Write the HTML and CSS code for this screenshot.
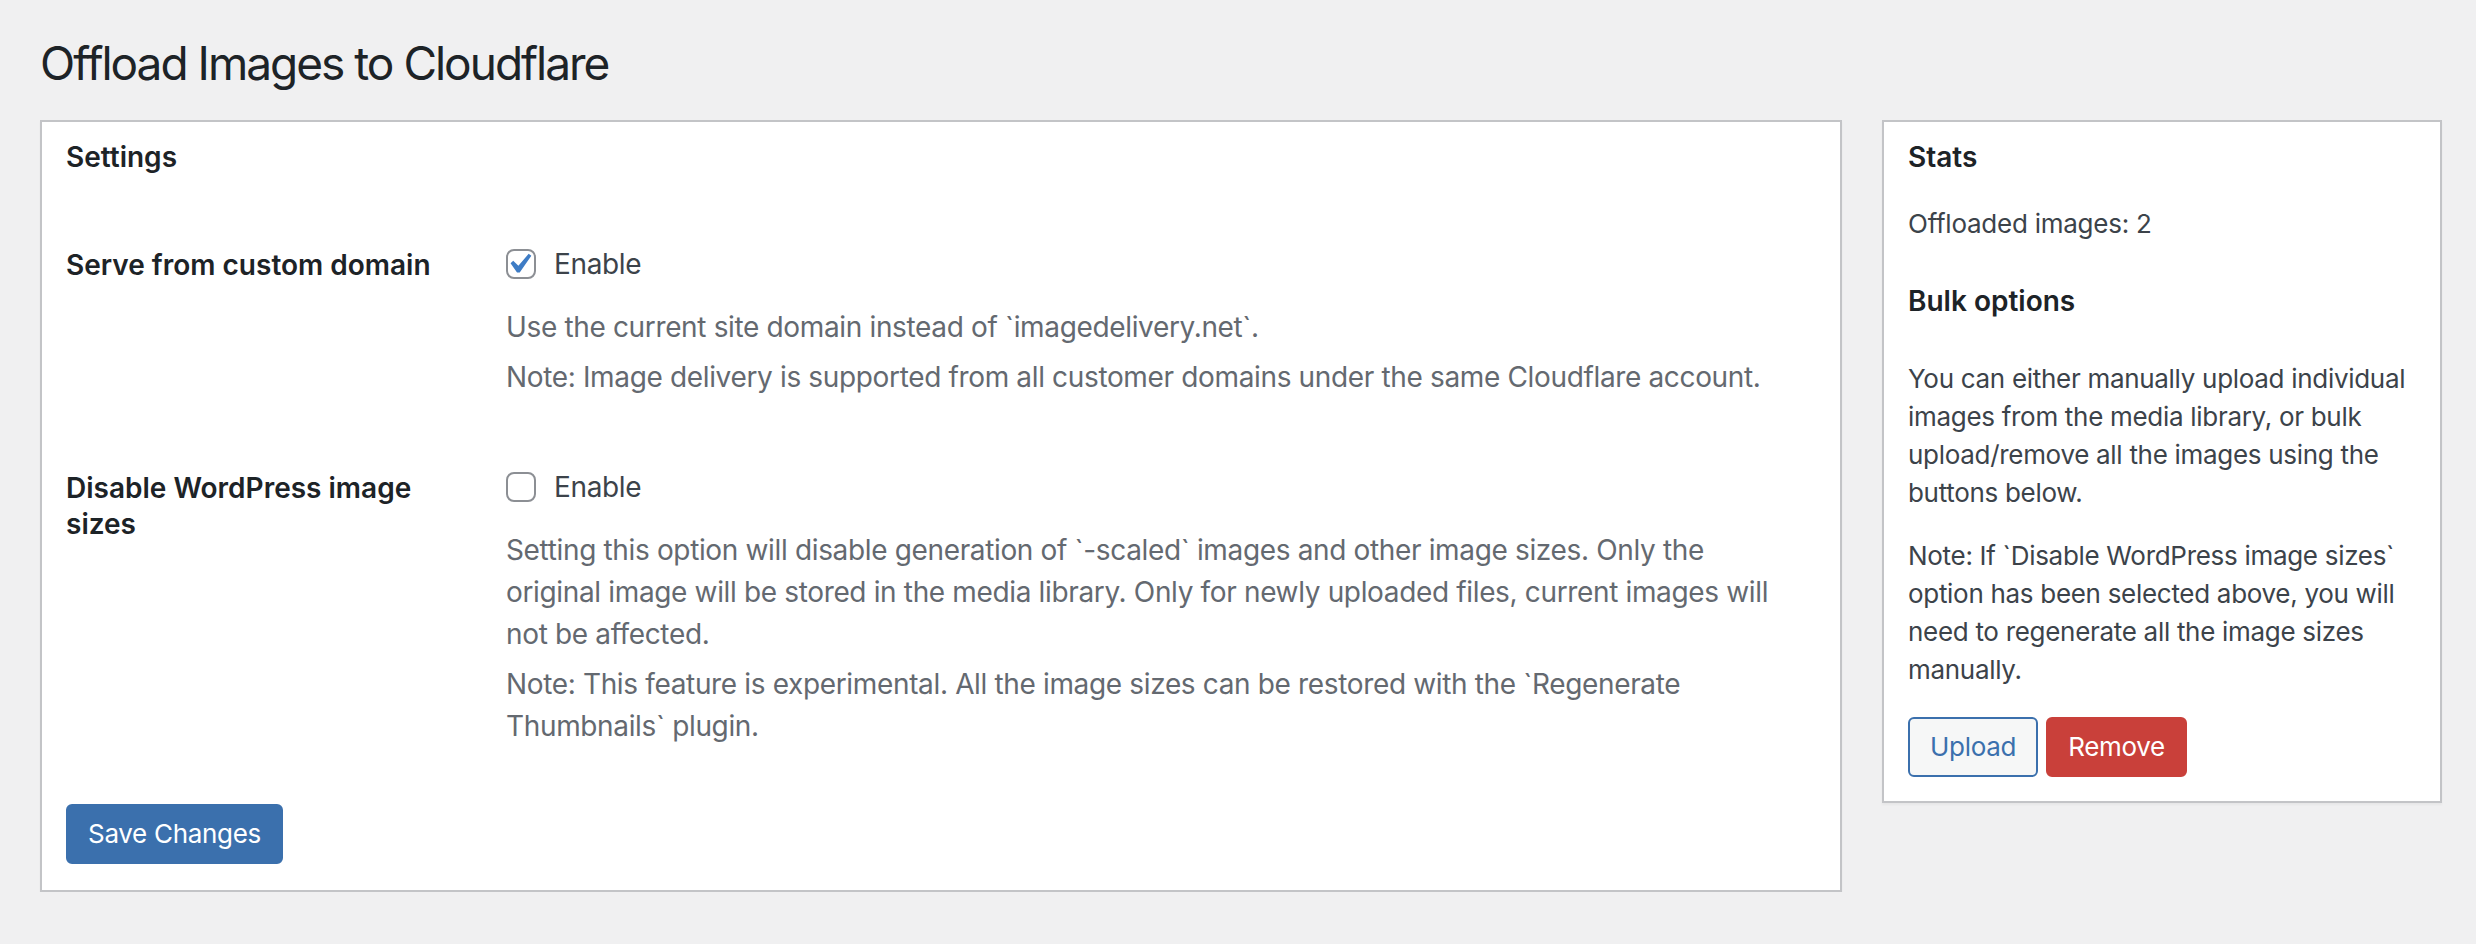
FILE: index.html
```html
<!DOCTYPE html>
<html lang="en">
<head>
<meta charset="utf-8">
<title>Offload Images to Cloudflare</title>
<link rel="stylesheet" href="styles.css">
</head>
<body>
<div class="wrap">
  <h1 class="page-title">Offload Images to Cloudflare</h1>
  <div class="columns">
    <div class="card settings">
      <h2 class="card-title">Settings</h2>
      <div class="form">
        <div class="row">
          <div class="label">Serve from custom domain</div>
          <div class="field">
            <label class="option">
              <span class="checkbox"><svg viewBox="1 0 20 20" aria-hidden="true"><path d="M14.83 4.89l1.34.94-5.81 8.38H9.02L5.78 9.67l1.34-1.25 2.57 2.4z"/></svg></span>
              <span class="option-text">Enable</span>
            </label>
            <div class="desc">
              <p>Use the current site domain instead of `imagedelivery.net`.</p>
              <p>Note: Image delivery is supported from all customer domains under the same Cloudflare account.</p>
            </div>
          </div>
        </div>
        <div class="row">
          <div class="label">Disable WordPress image sizes</div>
          <div class="field">
            <label class="option">
              <span class="checkbox"></span>
              <span class="option-text">Enable</span>
            </label>
            <div class="desc">
              <p>Setting this option will disable generation of `-scaled` images and other image sizes. Only the original image will be stored in the media library. Only for newly uploaded files, current images will not be affected.</p>
              <p>Note: This feature is experimental. All the image sizes can be restored with the `Regenerate Thumbnails` plugin.</p>
            </div>
          </div>
        </div>
      </div>
      <div class="submit">
        <button class="btn btn-primary" type="button">Save Changes</button>
      </div>
    </div>
    <div class="card stats">
      <h2 class="card-title">Stats</h2>
      <p class="stat-line">Offloaded images: 2</p>
      <h3 class="sub-title">Bulk options</h3>
      <p class="stats-text">You can either manually upload individual images from the media library, or bulk upload/remove all the images using the buttons below.</p>
      <p class="stats-text note">Note: If `Disable WordPress image sizes` option has been selected above, you will need to regenerate all the image sizes manually.</p>
      <div class="actions">
        <button class="btn btn-secondary" type="button">Upload</button>
        <button class="btn btn-danger" type="button">Remove</button>
      </div>
    </div>
  </div>
</div>
</body>
</html>
```
FILE: styles.css
```css
html, body {
  margin: 0;
  padding: 0;
}

body {
  background: #f0f0f1;
  font-family: Inter, "Liberation Sans", sans-serif;
  color: #3c434a;
}

.wrap {
  padding: 33px 34px 0 40px;
}

.page-title {
  margin: 0;
  font-size: 46px;
  font-weight: 400;
  line-height: 60px;
  letter-spacing: -2px;
  color: #1d2327;
}

.columns {
  display: flex;
  align-items: flex-start;
  gap: 40px;
  margin-top: 27px;
}

.card {
  box-sizing: border-box;
  background: #fff;
  border: 2px solid #c3c4c7;
  box-shadow: 0 2px 2px rgba(0, 0, 0, 0.04);
}

.settings {
  width: 1802px;
  padding: 15px 24px 26px;
}

.stats {
  width: 560px;
  padding: 15px 24px 24px;
}

.card-title {
  margin: 0;
  font-size: 28px;
  font-weight: 600;
  line-height: 40px;
  color: #1d2327;
}

.form {
  margin-top: 30px;
}

.row {
  display: grid;
  grid-template-columns: 400px 1fr;
  column-gap: 40px;
  padding: 40px 20px 31.5px 0;
}

.label {
  font-size: 28px;
  font-weight: 600;
  line-height: 36.4px;
  color: #1d2327;
}

.option {
  display: flex;
  align-items: center;
  gap: 18px;
  height: 30px;
  margin-top: 2px;
}

.checkbox {
  flex: none;
  box-sizing: border-box;
  width: 30px;
  height: 30px;
  border: 2px solid #8c8f94;
  border-radius: 8px;
  background: #fff;
  display: flex;
  align-items: center;
  justify-content: center;
}

.checkbox svg {
  flex: none;
  width: 40px;
  height: 40px;
  fill: #3e7cc5;
}

.option-text {
  font-size: 28px;
  line-height: 30px;
  letter-spacing: -0.35px;
  color: #3c434a;
}

.desc {
  margin-top: 27px;
}

.desc p {
  margin: 8px 0 0;
  font-size: 28px;
  line-height: 42px;
  letter-spacing: -0.35px;
  color: #646970;
}

.submit {
  display: flex;
  margin-top: 26px;
}

.btn {
  box-sizing: border-box;
  height: 60px;
  margin: 0;
  padding: 0 20px;
  border: 2px solid;
  border-radius: 6px;
  font-family: inherit;
  font-size: 26px;
  line-height: 56px;
  letter-spacing: -0.3px;
  cursor: pointer;
}

.btn-primary {
  background: #3b70ad;
  border-color: #3b70ad;
  color: #fff;
}

.btn-secondary {
  background: #f6f7f7;
  border-color: #3b70ad;
  color: #3b70ad;
}

.btn-danger {
  background: #c9403a;
  border-color: #c9403a;
  color: #fff;
}

.stat-line {
  margin: 28px 0 0;
  font-size: 26px;
  line-height: 38px;
  letter-spacing: -0.25px;
}

.sub-title {
  margin: 38px 0 39px;
  font-size: 28px;
  font-weight: 600;
  line-height: 40px;
  color: #1d2327;
}

.stats-text {
  margin: 0;
  font-size: 26px;
  line-height: 38px;
  letter-spacing: -0.3px;
}

.stats-text.note {
  margin-top: 25px;
}

.actions {
  display: flex;
  gap: 8px;
  margin-top: 28px;
}
```
